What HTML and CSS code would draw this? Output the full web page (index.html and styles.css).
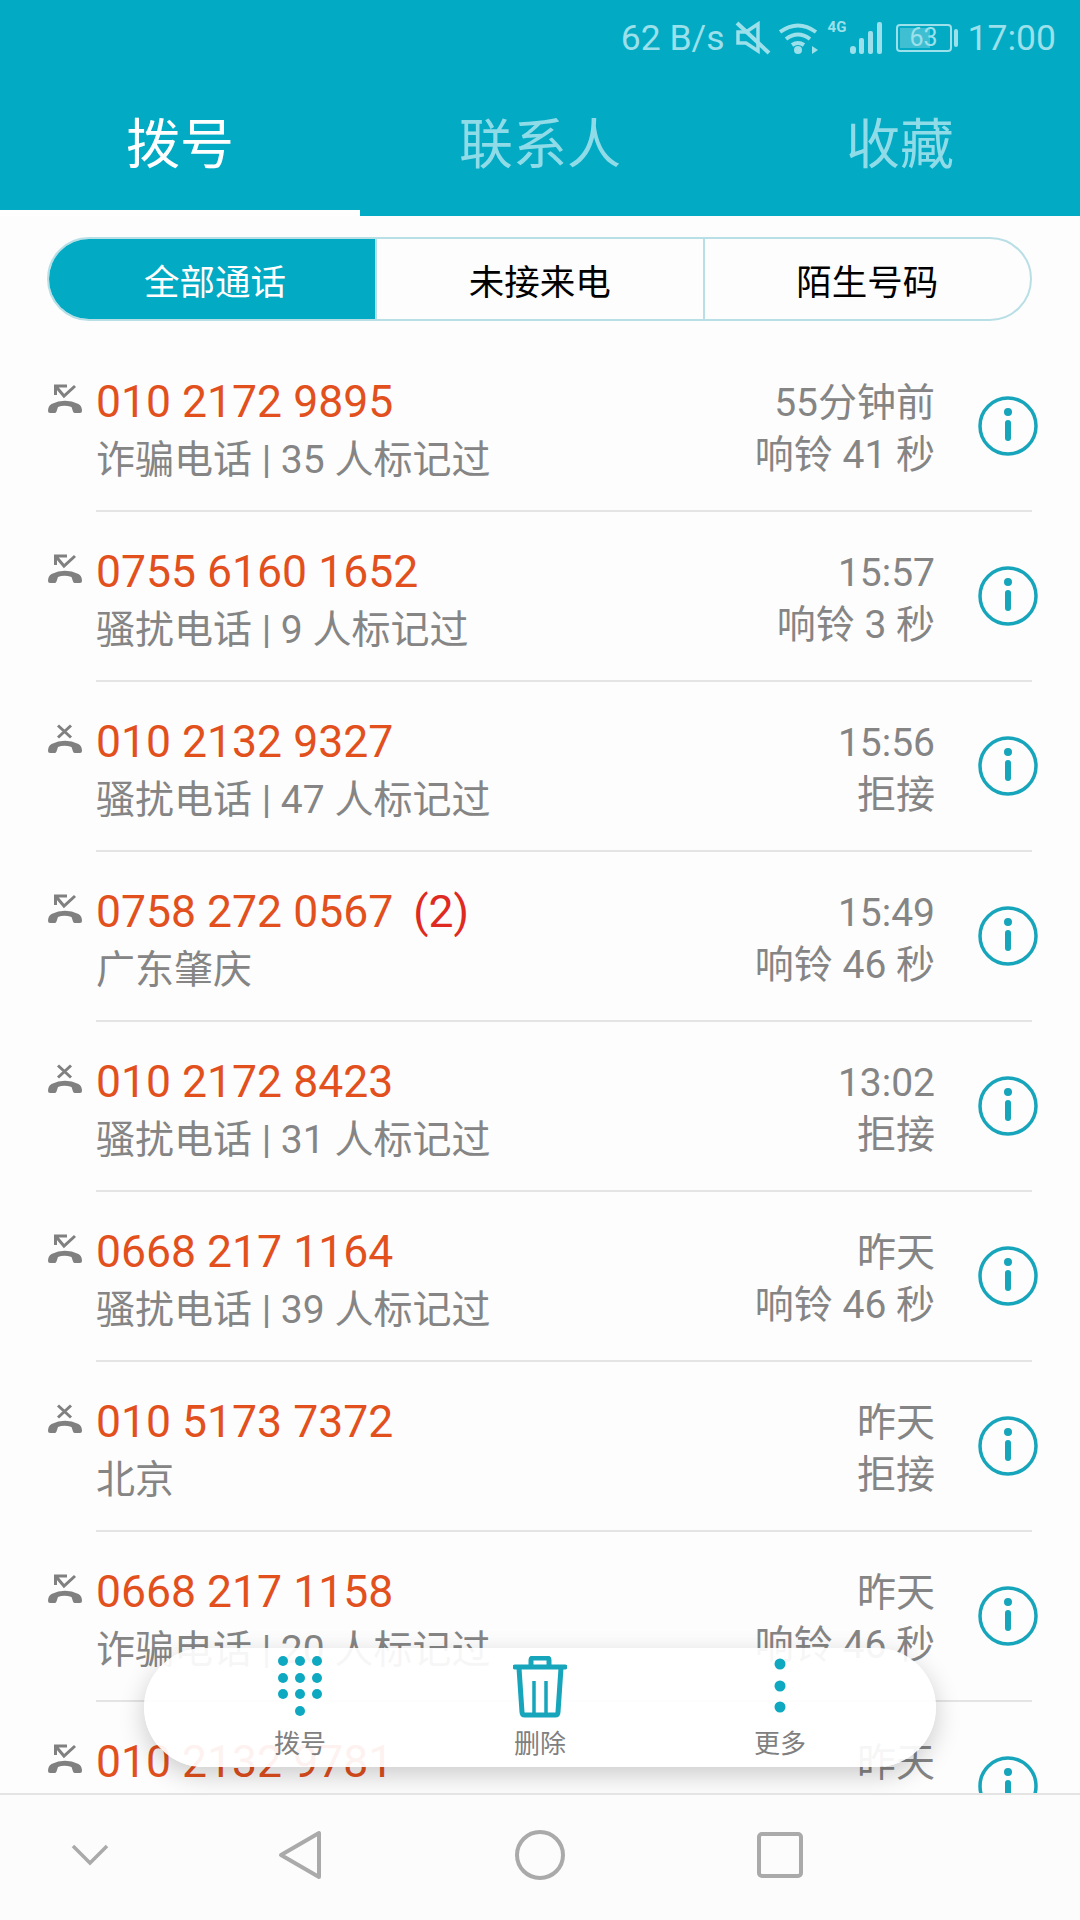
FILE: index.html
```html
<!DOCTYPE html>
<html lang="zh-CN">
<head>
    <meta charset="UTF-8">
    <title>拨号</title>
    <link rel="stylesheet" href="styles.css">
</head>
<body>
<svg class="defs" width="0" height="0">
    <symbol id="handset" viewBox="0 0 34 30">
        <path d="M0 27q0-5 3.500-7q13.500-6.500 27 0q3.500 2 3.500 7q0 2-2 2h-5q-1.500 0-2-1.500l-1.500-4.500q-7.500-2.500-13.500 0l-1.500 4.500q-.5 1.500-2 1.500h-4.500q-2 0-2-2z" fill="#808080"/>
    </symbol>
    <symbol id="missed" viewBox="0 0 34 30">
        <use href="#handset"/>
        <path d="M19 2H7.500V11M7.500 2L16 12L27 2" fill="none" stroke="#808080" stroke-width="3"/>
    </symbol>
    <symbol id="rejected" viewBox="0 0 34 30">
        <use href="#handset"/>
        <path d="M10 1.500L23 13.500M23 1.500L10 13.500" fill="none" stroke="#808080" stroke-width="3"/>
    </symbol>
    <symbol id="info" viewBox="0 0 60 60">
        <circle cx="30" cy="30" r="28" fill="none" stroke="#17a5bb" stroke-width="3.500"/>
        <circle cx="30" cy="16" r="4" fill="#17a5bb"/>
        <path d="M30 27V42" fill="none" stroke="#17a5bb" stroke-width="6" stroke-linecap="round"/>
    </symbol>
</svg>

<div class="page">
    <header class="header">
        <div class="status-bar">
            <span class="status-text">62 B/s</span>
            <svg class="ic-mute" width="36" height="34" viewBox="0 0 36 34">
                <path d="M3 11h8l12-8v27l-12-8H3z" fill="none" stroke="#9be0ea" stroke-width="3.500"/>
                <path d="M2 2L34 32" stroke="#9be0ea" stroke-width="4"/>
            </svg>
            <svg class="ic-wifi" width="40" height="32" viewBox="0 0 40 32">
                <path d="M1 10q18-13 36 0M7 17q12-9 24 0M13 23q6-4 12 0" fill="none" stroke="#9be0ea" stroke-width="4"/>
                <circle cx="19" cy="28" r="4" fill="#9be0ea"/>
                <path d="M33 24l6 4l-6 4z" fill="#9be0ea"/>
            </svg>
            <div class="signal">
                <span class="net">4G</span>
                <svg width="36" height="34" viewBox="0 0 36 34">
                    <rect x="2" y="25" width="6" height="8" rx="3" fill="#9be0ea"/>
                    <rect x="11" y="17" width="5" height="16" rx="2" fill="#9be0ea"/>
                    <rect x="20" y="10" width="5" height="23" rx="2" fill="#9be0ea"/>
                    <rect x="29" y="1" width="5" height="32" rx="2" fill="#9be0ea"/>
                </svg>
            </div>
            <div class="battery"><span class="battery-level"></span><span class="battery-num">63</span></div>
            <span class="battery-nub"></span>
            <span class="status-text clock">17:00</span>
        </div>
        <nav class="tabs">
            <div class="tab tab-active">拨号</div>
            <div class="tab">联系人</div>
            <div class="tab">收藏</div>
        </nav>
        <div class="tab-line"></div>
    </header>

    <main class="content">
        <div class="segment">
            <div class="seg seg-active">全部通话</div>
            <div class="seg">未接来电</div>
            <div class="seg">陌生号码</div>
        </div>

        <div class="calls">
            <div class="call">
                <svg class="call-type"><use href="#missed"/></svg>
                <div class="call-body">
                    <div class="call-main"><div class="number">010 2172 9895</div><div class="note">诈骗电话 | 35 人标记过</div></div>
                    <div class="call-side"><div>55分钟前</div><div>响铃 41 秒</div></div>
                    <svg class="info"><use href="#info"/></svg>
                </div>
            </div>
            <div class="call">
                <svg class="call-type"><use href="#missed"/></svg>
                <div class="call-body">
                    <div class="call-main"><div class="number">0755 6160 1652</div><div class="note">骚扰电话 | 9 人标记过</div></div>
                    <div class="call-side"><div>15:57</div><div>响铃 3 秒</div></div>
                    <svg class="info"><use href="#info"/></svg>
                </div>
            </div>
            <div class="call">
                <svg class="call-type"><use href="#rejected"/></svg>
                <div class="call-body">
                    <div class="call-main"><div class="number">010 2132 9327</div><div class="note">骚扰电话 | 47 人标记过</div></div>
                    <div class="call-side"><div>15:56</div><div>拒接</div></div>
                    <svg class="info"><use href="#info"/></svg>
                </div>
            </div>
            <div class="call">
                <svg class="call-type"><use href="#missed"/></svg>
                <div class="call-body">
                    <div class="call-main"><div class="number">0758 272 0567<span class="count">(2)</span></div><div class="note">广东肇庆</div></div>
                    <div class="call-side"><div>15:49</div><div>响铃 46 秒</div></div>
                    <svg class="info"><use href="#info"/></svg>
                </div>
            </div>
            <div class="call">
                <svg class="call-type"><use href="#rejected"/></svg>
                <div class="call-body">
                    <div class="call-main"><div class="number">010 2172 8423</div><div class="note">骚扰电话 | 31 人标记过</div></div>
                    <div class="call-side"><div>13:02</div><div>拒接</div></div>
                    <svg class="info"><use href="#info"/></svg>
                </div>
            </div>
            <div class="call">
                <svg class="call-type"><use href="#missed"/></svg>
                <div class="call-body">
                    <div class="call-main"><div class="number">0668 217 1164</div><div class="note">骚扰电话 | 39 人标记过</div></div>
                    <div class="call-side"><div>昨天</div><div>响铃 46 秒</div></div>
                    <svg class="info"><use href="#info"/></svg>
                </div>
            </div>
            <div class="call">
                <svg class="call-type"><use href="#rejected"/></svg>
                <div class="call-body">
                    <div class="call-main"><div class="number">010 5173 7372</div><div class="note">北京</div></div>
                    <div class="call-side"><div>昨天</div><div>拒接</div></div>
                    <svg class="info"><use href="#info"/></svg>
                </div>
            </div>
            <div class="call">
                <svg class="call-type"><use href="#missed"/></svg>
                <div class="call-body">
                    <div class="call-main"><div class="number">0668 217 1158</div><div class="note">诈骗电话 | 20 人标记过</div></div>
                    <div class="call-side"><div>昨天</div><div>响铃 46 秒</div></div>
                    <svg class="info"><use href="#info"/></svg>
                </div>
            </div>
            <div class="call">
                <svg class="call-type"><use href="#missed"/></svg>
                <div class="call-body">
                    <div class="call-main"><div class="number">010 2132 9781</div></div>
                    <div class="call-side"><div>昨天</div></div>
                    <svg class="info"><use href="#info"/></svg>
                </div>
            </div>
        </div>

        <div class="toolbar">
            <div class="tool">
                <svg width="52" height="68" viewBox="0 0 52 68">
                    <g fill="#0ea8c0">
                        <circle cx="9" cy="5" r="5"/><circle cx="26" cy="5" r="5"/><circle cx="43" cy="5" r="5"/>
                        <circle cx="9" cy="22" r="5"/><circle cx="26" cy="22" r="5"/><circle cx="43" cy="22" r="5"/>
                        <circle cx="9" cy="38" r="5"/><circle cx="26" cy="38" r="5"/><circle cx="43" cy="38" r="5"/>
                        <circle cx="26" cy="55" r="5"/>
                    </g>
                </svg>
                <span>拨号</span>
            </div>
            <div class="tool">
                <svg width="54" height="68" viewBox="0 0 54 68">
                    <g fill="none" stroke="#17a5bb" stroke-width="5">
                        <path d="M2 11H52" stroke-linecap="round"/>
                        <path d="M18 10V4q0-2 2-2h14q2 0 2 2v6"/>
                        <path d="M6 12l3 44q0 3 3 3h30q3 0 3-3l3-44"/>
                        <path d="M21 25V58M33 25V58" stroke-width="3.500"/>
                    </g>
                </svg>
                <span>删除</span>
            </div>
            <div class="tool">
                <svg width="52" height="68" viewBox="0 0 52 68">
                    <g fill="#0ea8c0">
                        <circle cx="26" cy="8" r="5.500"/><circle cx="26" cy="30" r="5.500"/><circle cx="26" cy="51" r="5.500"/>
                    </g>
                </svg>
                <span>更多</span>
            </div>
        </div>
    </main>

    <footer class="navbar">
        <div class="nav-key nav-key-first">
            <svg width="40" height="24" viewBox="0 0 40 24"><path d="M3 3L20 20L37 3" fill="none" stroke="#aaa" stroke-width="3.500"/></svg>
        </div>
        <div class="nav-key">
            <svg width="44" height="50" viewBox="0 0 44 50"><path d="M41 3V47L3 25z" fill="none" stroke="#aaa" stroke-width="4" stroke-linejoin="round"/></svg>
        </div>
        <div class="nav-key">
            <svg width="50" height="50" viewBox="0 0 50 50"><circle cx="25" cy="25" r="23" fill="none" stroke="#aaa" stroke-width="4"/></svg>
        </div>
        <div class="nav-key">
            <svg width="46" height="46" viewBox="0 0 46 46"><rect x="2" y="2" width="42" height="42" rx="3" fill="none" stroke="#aaa" stroke-width="4"/></svg>
        </div>
    </footer>
</div>
</body>
</html>
```

FILE: styles.css
```css
* {
    box-sizing: border-box;
}

body {
    margin: 0;
    background: #fdfdfd;
    font-family: Roboto, "Noto Sans CJK SC", sans-serif;
}

.defs {
    position: absolute;
}

.page {
    width: 1080px;
    height: 1920px;
    display: flex;
    flex-direction: column;
    overflow: hidden;
}

/* header */
.header {
    height: 216px;
    flex: none;
    background: #02aac3;
    display: flex;
    flex-direction: column;
}

.status-bar {
    height: 72px;
    padding-top: 4px;
    padding-right: 24px;
    display: flex;
    justify-content: flex-end;
    align-items: center;
    color: #9be0ea;
}

.status-text {
    font-size: 35.500px;
    line-height: 68px;
}

.ic-mute {
    margin-left: 10px;
}

.ic-wifi {
    margin-left: 8px;
}

.signal {
    margin-left: 9px;
    padding-left: 20px;
    position: relative;
    display: flex;
}

.net {
    position: absolute;
    left: 0;
    top: -3px;
    font-size: 15px;
    font-weight: 700;
}

.battery {
    width: 56px;
    height: 28px;
    margin-left: 12px;
    border: 2px solid #9be0ea;
    border-radius: 4px;
    position: relative;
    display: flex;
    align-items: center;
    justify-content: center;
}

.battery-level {
    position: absolute;
    left: 2px;
    top: 2px;
    bottom: 2px;
    width: 30px;
    background: rgba(255, 255, 255, .25);
}

.battery-num {
    position: relative;
    font-size: 25px;
    line-height: 24px;
}

.battery-nub {
    width: 4px;
    height: 18px;
    margin-left: 2px;
    border-radius: 2px;
    background: #9be0ea;
}

.clock {
    margin-left: 10px;
}

.tabs {
    height: 138px;
    flex: none;
    display: flex;
}

.tab {
    width: 360px;
    padding-top: 6px;
    font-size: 54px;
    line-height: 136px;
    text-align: center;
    color: #8fdce8;
}

.tab-active {
    color: #fff;
}

.tab-line {
    width: 360px;
    height: 6px;
    flex: none;
    background: #fff;
}

/* list */
.content {
    flex: 1;
    position: relative;
    overflow: hidden;
}

.segment {
    height: 84px;
    margin: 21px 48px 21px 47px;
    display: flex;
    border: 2px solid #b9dfe6;
    border-radius: 42px;
    overflow: hidden;
}

.seg {
    flex: 1;
    padding-top: 4px;
    border-left: 2px solid #b9dfe6;
    font-size: 35.500px;
    line-height: 80px;
    text-align: center;
    color: #000;
}

.seg-active {
    flex: none;
    width: 328px;
    margin: -2px 0 -2px -2px;
    padding-left: 8px;
    border-left: 0;
    line-height: 84px;
    background: #02aac3;
    color: #fff;
}

.call {
    height: 170px;
    padding: 0 48px 0 47px;
    display: flex;
}

.call-type {
    width: 34px;
    height: 30px;
    margin: 42px 14px 0 1px;
    flex: none;
}

.call-body {
    flex: 1;
    display: flex;
    align-items: flex-start;
    border-bottom: 2px solid #e4e4e4;
}

.call-main {
    flex: 1;
    padding-top: 33px;
}

.number {
    font-size: 44.500px;
    line-height: 54px;
    color: #e2501d;
}

.count {
    margin-left: 20px;
    color: #df2a22;
}

.note {
    margin-top: 6px;
    font-size: 39px;
    line-height: 50px;
    color: #858585;
}

.call-side {
    padding-top: 35px;
    font-size: 39px;
    line-height: 52px;
    text-align: right;
    color: #858585;
}

.info {
    width: 60px;
    height: 60px;
    margin: 54px -6px 0 43px;
    flex: none;
}

/* floating toolbar */
.toolbar {
    position: absolute;
    left: 144px;
    top: 1432px;
    width: 792px;
    height: 119px;
    padding: 8px 36px 0;
    display: flex;
    justify-content: space-between;
    border-radius: 60px;
    background: rgba(255, 255, 255, .93);
    box-shadow: 0 8px 26px rgba(0, 0, 0, .2);
}

.tool {
    width: 240px;
    display: flex;
    flex-direction: column;
    align-items: center;
    font-size: 26px;
    line-height: 34px;
    color: #808080;
}

.tool svg {
    margin-bottom: 3px;
}

/* bottom nav */
.navbar {
    height: 127px;
    flex: none;
    padding-bottom: 5px;
    background: #fcfcfc;
    border-top: 2px solid #e4e4e4;
    display: flex;
    align-items: center;
}

.nav-key {
    width: 240px;
    display: flex;
    justify-content: center;
}

.nav-key-first {
    width: 180px;
}
```
